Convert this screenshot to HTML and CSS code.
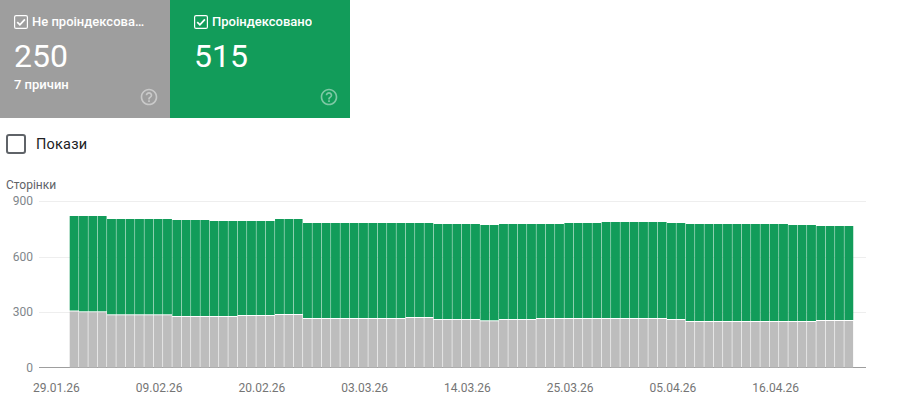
FILE: index.html
```html
<!DOCTYPE html>
<html lang="uk">
<head>
<meta charset="utf-8">
<title>Сторінки</title>
<link rel="stylesheet" href="styles.css">
</head>
<body>
<div class="cards">
  <div class="card card-gray">
    <div class="card-title">
      <svg class="check" viewBox="0 0 14 14"><rect x="0.6" y="0.6" width="12.8" height="12.8" rx="1.5"/><path class="tick" d="M3.2 7.2l2.7 2.6 5-5.4"/></svg>
      <span class="card-label">Не проіндексовано</span>
    </div>
    <div class="card-num">250</div>
    <div class="card-sub">7 причин</div>
    <svg class="help" viewBox="0 0 24 24"><path d="M11 18h2v-2h-2v2zm1-16C6.48 2 2 6.48 2 12s4.48 10 10 10 10-4.48 10-10S17.52 2 12 2zm0 18c-4.41 0-8-3.59-8-8s3.59-8 8-8 8 3.59 8 8-3.59 8-8 8zm0-14c-2.21 0-4 1.79-4 4h2c0-1.1.9-2 2-2s2 .9 2 2c0 2-3 1.75-3 5h2c0-2.25 3-2.5 3-5 0-2.21-1.79-4-4-4z"/></svg>
  </div>
  <div class="card card-green">
    <div class="card-title">
      <svg class="check" viewBox="0 0 14 14"><rect x="0.6" y="0.6" width="12.8" height="12.8" rx="1.5"/><path class="tick" d="M3.2 7.2l2.7 2.6 5-5.4"/></svg>
      <span class="card-label">Проіндексовано</span>
    </div>
    <div class="card-num">515</div>
    <svg class="help" viewBox="0 0 24 24"><path d="M11 18h2v-2h-2v2zm1-16C6.48 2 2 6.48 2 12s4.48 10 10 10 10-4.48 10-10S17.52 2 12 2zm0 18c-4.41 0-8-3.59-8-8s3.59-8 8-8 8 3.59 8 8-3.59 8-8 8zm0-14c-2.21 0-4 1.79-4 4h2c0-1.1.9-2 2-2s2 .9 2 2c0 2-3 1.75-3 5h2c0-2.25 3-2.5 3-5 0-2.21-1.79-4-4-4z"/></svg>
  </div>
</div>
<label class="toggle"><span class="box"></span><span class="toggle-text">Покази</span></label>
<div class="chart">
  <div class="chart-title">Сторінки</div>
  <div class="chart-body">
    <div class="y-axis"><span>900</span><span>600</span><span>300</span><span>0</span></div>
    <svg id="plot" class="plot" width="827" height="182" viewBox="0 0 827 182"></svg>
  </div>
  <div class="x-axis">
    <span>29.01.26</span><span>09.02.26</span><span>20.02.26</span><span>03.03.26</span><span>14.03.26</span><span>25.03.26</span><span>05.04.26</span><span>16.04.26</span>
  </div>
</div>
<script src="chart.js"></script>
</body>
</html>
```
FILE: styles.css
```css
* { box-sizing: border-box; }
html, body { margin: 0; padding: 0; background: #fff; }
body { font-family: Roboto, "Liberation Sans", sans-serif; width: 899px; height: 413px; overflow: hidden; }

.cards { display: flex; height: 118px; }
.card { position: relative; color: #fff; padding: 14px 0 0 14px; }
.card-gray { width: 170px; background: #9e9e9e; }
.card-green { width: 180px; background: #129c5a; padding-left: 24px; }
.card-title { display: flex; align-items: center; height: 16px; gap: 4px; }
.check { width: 14px; height: 14px; flex: none; fill: none; stroke: #fff; stroke-width: 1.2; }
.tick { stroke-width: 1.8; }
.card-label { font-size: 13px; font-weight: 500; line-height: 16px; max-width: 116px; white-space: nowrap; overflow: hidden; text-overflow: ellipsis; }
.card-num { font-size: 32px; line-height: 40px; margin-top: 6px; }
.card-sub { font-size: 13px; font-weight: 500; line-height: 16px; margin-top: 1px; }
.help { position: absolute; right: 11px; bottom: 11px; width: 20px; height: 20px; fill: #fff; opacity: 0.45; }

.toggle { display: flex; align-items: center; gap: 10px; margin: 16px 0 0 6px; height: 20px; }
.box { width: 20px; height: 20px; border: 2px solid #5f6368; border-radius: 3px; }
.toggle-text { font-size: 14.5px; color: #202124; letter-spacing: 0.2px; }

.chart { margin-top: 23px; }
.chart-title { font-size: 12px; line-height: 16px; color: #5f6368; padding-left: 6px; }
.chart-body { display: flex; margin-top: 0; height: 182px; }
.y-axis { width: 39px; height: 183px; padding-right: 6px; display: flex; flex-direction: column; justify-content: space-between; align-items: flex-end; font-size: 12px; line-height: 16px; color: #80868b; }
.plot { display: block; flex: none; }
.grid { fill: #eeeeee; }
.base { fill: #9e9e9e; }
.bar-top { fill: #129c5a; }
.bar-low { fill: #bdbdbd; }
.x-axis { display: flex; padding-left: 33px; margin-top: 5px; font-size: 12px; line-height: 16px; color: #757575; }
.x-axis span { flex: none; width: 102.75px; }
```
FILE: chart.js
```js
// Run-length data: [bars, top y, boundary y] in page pixels.
var tops = [[4,216],[7,219],[4,220],[7,221],[3,219],[14,223],[5,224],[2,225],[7,224],[4,223],[7,222],[2,223],[11,224],[3,225],[4,226]];
var lows = [[1,310.5],[3,311.3],[7,314.3],[7,316],[4,315],[3,314],[11,318],[3,317],[5,319],[2,320.3],[4,319],[14,318],[2,319],[14,321],[4,320]];
function expand(runs) {
  var out = [];
  runs.forEach(function (r) { for (var i = 0; i < r[0]; i++) out.push(r[1]); });
  return out;
}
var t = expand(tops), l = expand(lows);
var svg = document.getElementById('plot');
var NS = 'http://www.w3.org/2000/svg';
var OY = 193, OX = 39;
function rect(cls, x, y, w, h) {
  var r = document.createElementNS(NS, 'rect');
  r.setAttribute('class', cls);
  r.setAttribute('x', x); r.setAttribute('y', y);
  r.setAttribute('width', w); r.setAttribute('height', h);
  svg.appendChild(r);
}
[201, 257, 312].forEach(function (y) { rect('grid', 0, y - OY, 827, 1); });
rect('base', 0, 367 - OY, 827, 1);
var step = 784 / 84;
for (var i = 0; i < 84; i++) {
  var x = 69.7 - OX + i * step;
  rect('bar-top', x, t[i] - OY, step - 0.45, l[i] - t[i]);
  rect('bar-low', x, l[i] + 1 - OY, step - 0.6, 367.5 - l[i] - 1);
}
```
